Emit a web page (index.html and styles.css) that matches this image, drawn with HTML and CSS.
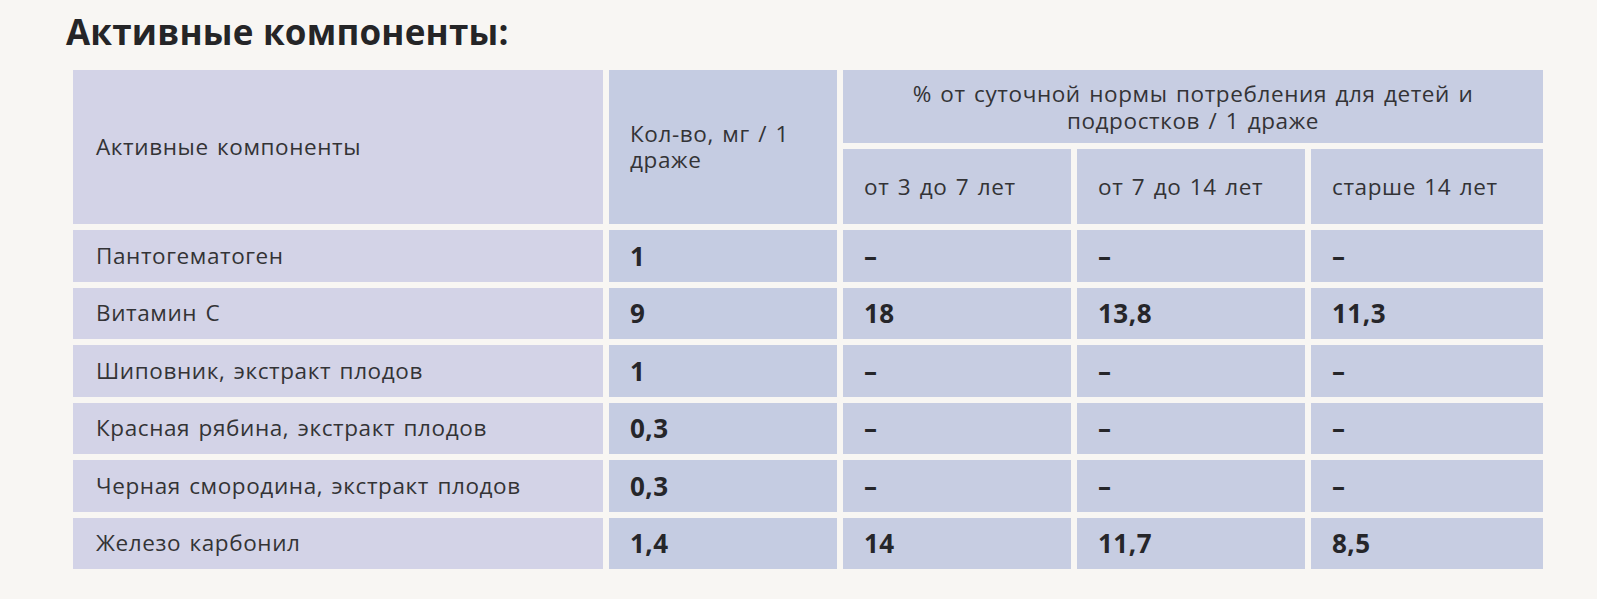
FILE: index.html
```html
<!DOCTYPE html>
<html lang="ru">
<head>
<meta charset="utf-8">
<title>Активные компоненты</title>
<link rel="stylesheet" href="styles.css">
</head>
<body>
<div class="page">
  <h1 class="title">Активные компоненты:</h1>
  <div class="grid">
    <div class="cell c1 head-main">Активные компоненты</div>
    <div class="cell c2 head-qty">Кол-во, мг / 1 драже</div>
    <div class="cell c3 head-span"><span class="line">% от суточной нормы потребления для детей и</span><span class="line">подростков / 1 драже</span></div>
    <div class="cell c3 sub">от 3 до 7 лет</div>
    <div class="cell c3 sub">от 7 до 14 лет</div>
    <div class="cell c3 sub">старше 14 лет</div>

    <div class="cell c1">Пантогематоген</div>
    <div class="cell c2 num">1</div>
    <div class="cell c3 num">–</div>
    <div class="cell c3 num">–</div>
    <div class="cell c3 num">–</div>

    <div class="cell c1">Витамин С</div>
    <div class="cell c2 num">9</div>
    <div class="cell c3 num">18</div>
    <div class="cell c3 num">13,8</div>
    <div class="cell c3 num">11,3</div>

    <div class="cell c1">Шиповник, экстракт плодов</div>
    <div class="cell c2 num">1</div>
    <div class="cell c3 num">–</div>
    <div class="cell c3 num">–</div>
    <div class="cell c3 num">–</div>

    <div class="cell c1">Красная рябина, экстракт плодов</div>
    <div class="cell c2 num">0,3</div>
    <div class="cell c3 num">–</div>
    <div class="cell c3 num">–</div>
    <div class="cell c3 num">–</div>

    <div class="cell c1">Черная смородина, экстракт плодов</div>
    <div class="cell c2 num">0,3</div>
    <div class="cell c3 num">–</div>
    <div class="cell c3 num">–</div>
    <div class="cell c3 num">–</div>

    <div class="cell c1">Железо карбонил</div>
    <div class="cell c2 num">1,4</div>
    <div class="cell c3 num">14</div>
    <div class="cell c3 num">11,7</div>
    <div class="cell c3 num">8,5</div>
  </div>
</div>
</body>
</html>
```
FILE: styles.css
```css
html, body {
  margin: 0;
  padding: 0;
  background: #f8f6f3;
}
.page {
  width: 1597px;
  height: 599px;
  padding: 12px 0 0 66px;
  box-sizing: border-box;
  font-family: "Open Sans", "Noto Sans", sans-serif;
  color: #2b2b2d;
}
.title {
  margin: 0;
  font-size: 35px;
  line-height: 40px;
  font-weight: 700;
  color: #252527;
  letter-spacing: 0.2px;
}
.grid {
  margin: 18px 0 0 7px;
  display: grid;
  grid-template-columns: 530px 228px 228px 228px 232px;
  grid-template-rows: 73px 75px repeat(6, 51.5px);
  gap: 6px;
}
.cell {
  display: flex;
  align-items: center;
  padding: 0 0 0 21px;
  font-size: 22.5px;
  line-height: 26px;
  letter-spacing: 0.6px;
  word-spacing: 2px;
  color: #333336;
}
.c1 { background: #d3d3e7; padding-left: 23px; }
.c2 { background: #c5cce2; }
.c3 { background: #c7cde2; }
.head-main { grid-row: 1 / span 2; }
.head-qty { grid-row: 1 / span 2; padding-right: 30px; }
.head-span {
  grid-column: 3 / span 3;
  flex-direction: column;
  justify-content: center;
  align-items: center;
  gap: 2px;
  text-align: center;
  padding: 0;
  line-height: 25px;
}
.line { display: block; }
.num {
  font-weight: 700;
  font-size: 26px;
  letter-spacing: 0.5px;
  color: #26262a;
}
```
